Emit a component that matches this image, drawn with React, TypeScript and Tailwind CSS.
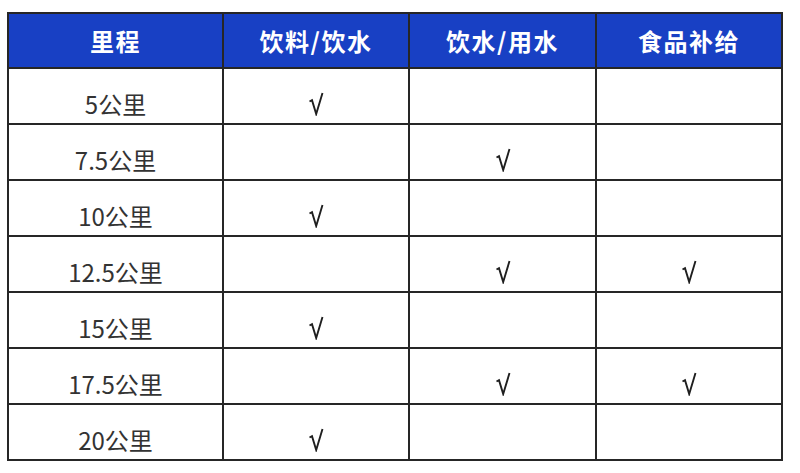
import React from "react";

const rows: [string, boolean, boolean, boolean][] = [
  ["5公里", true, false, false],
  ["7.5公里", false, true, false],
  ["10公里", true, false, false],
  ["12.5公里", false, true, true],
  ["15公里", true, false, false],
  ["17.5公里", false, true, true],
  ["20公里", true, false, false],
];

const headers = ["里程", "饮料/饮水", "饮水/用水", "食品补给"];

function Check() {
  return (
    <svg width="16" height="24" viewBox="0 0 16 24" fill="none" aria-label="√">
      <path
        d="M1.5 9.5 L4 8.2 L8.2 22 L14.5 1"
        stroke="#1f1f1f"
        strokeWidth="1.9"
        strokeLinejoin="miter"
        strokeLinecap="butt"
      />
    </svg>
  );
}

export default function App() {
  return (
    <div
      className="w-[800px] h-[473px] bg-white overflow-hidden pt-[12px] pl-[7px]"
      style={{ fontFamily: '"Noto Sans CJK SC", "Noto Sans", sans-serif' }}
    >
      <div className="w-[776px] grid grid-cols-[213px_184px_185px_184px] grid-rows-[53px_repeat(7,54px)] gap-[2px] p-[2px] bg-[#262626]">
        {headers.map((h) => (
          <div
            key={h}
            className="bg-[#1840c4] text-white font-bold text-[24px] tracking-[1.5px] flex items-center justify-center"
          >
            {h}
          </div>
        ))}
        {rows.map(([label, a, b, c]) => (
          <React.Fragment key={label}>
            <div className="bg-white text-[#333] text-[24px] flex items-center justify-center pt-[16px]">
              {label}
            </div>
            {[a, b, c].map((v, i) => (
              <div
                key={i}
                className="bg-white flex items-center justify-center pt-[16px]"
              >
                {v ? <Check /> : null}
              </div>
            ))}
          </React.Fragment>
        ))}
      </div>
    </div>
  );
}
